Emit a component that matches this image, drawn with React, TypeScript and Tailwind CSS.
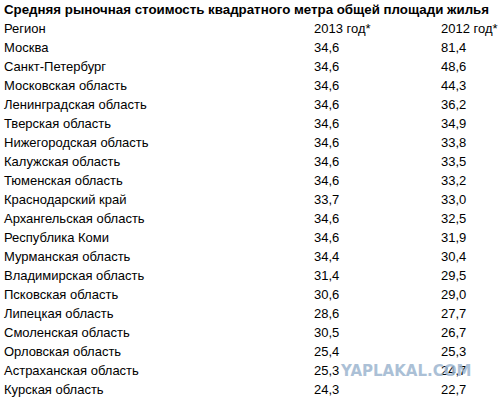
import React from "react";

const rows: [string, string, string][] = [
  ["Москва", "34,6", "81,4"],
  ["Санкт-Петербург", "34,6", "48,6"],
  ["Московская область", "34,6", "44,3"],
  ["Ленинградская область", "34,6", "36,2"],
  ["Тверская область", "34,6", "34,9"],
  ["Нижегородская область", "34,6", "33,8"],
  ["Калужская область", "34,6", "33,5"],
  ["Тюменская область", "34,6", "33,2"],
  ["Краснодарский край", "33,7", "33,0"],
  ["Архангельская область", "34,6", "32,5"],
  ["Республика Коми", "34,6", "31,9"],
  ["Мурманская область", "34,4", "30,4"],
  ["Владимирская область", "31,4", "29,5"],
  ["Псковская область", "30,6", "29,0"],
  ["Липецкая область", "28,6", "27,7"],
  ["Смоленская область", "30,5", "26,7"],
  ["Орловская область", "25,4", "25,3"],
  ["Астраханская область", "25,3", "24,7"],
  ["Курская область", "24,3", "22,7"],
];

const Row = ({ cells }: { cells: [string, string, string] }) => (
  <div className="flex h-[19px] items-center">
    <div className="w-[310px]">{cells[0]}</div>
    <div className="w-[127px]">{cells[1]}</div>
    <div>{cells[2]}</div>
  </div>
);

export default function App() {
  return (
    <div
      className="relative h-[404px] w-[503px] overflow-hidden bg-white pl-[4px] text-[13px] leading-none text-black"
      style={{ fontFamily: '"Liberation Sans", Arial, sans-serif' }}
    >
      <div className="flex h-[19px] items-center text-[13.3px] font-bold">
        Средняя рыночная стоимость квадратного метра общей площади жилья
      </div>
      <Row cells={["Регион", "2013 год*", "2012 год*"]} />
      {rows.map((r) => (
        <Row key={r[0]} cells={r} />
      ))}
      <div
        className="pointer-events-none absolute left-[341px] top-[364px] text-[15px] font-bold text-[#9db6cf] opacity-85"
        style={{ fontFamily: '"DejaVu Sans", sans-serif' }}
      >
        YAPLAKAL.COM
      </div>
    </div>
  );
}
